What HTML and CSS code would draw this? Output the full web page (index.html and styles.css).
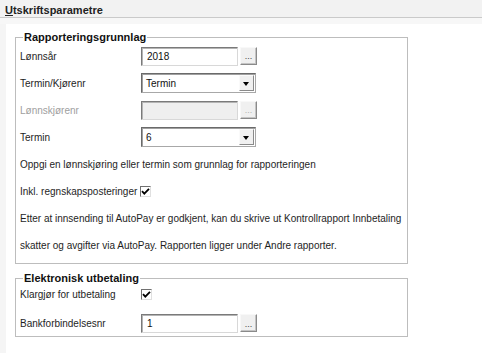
FILE: index.html
```html
<!DOCTYPE html>
<html>
<head>
<meta charset="utf-8">
<link rel="stylesheet" href="styles.css">
</head>
<body>
<div class="header"><span class="title"><u>U</u>tskriftsparametre</span></div>
<div class="band"></div>
<div class="main">
  <div class="content">
    <fieldset class="group g1">
      <legend>Rapporteringsgrunnlag</legend>
      <div class="rows">
        <div class="row">
          <span class="label">Lønnsår</span>
          <span class="field"><span class="input">2018</span><span class="btn">...</span></span>
        </div>
        <div class="row">
          <span class="label">Termin/Kjørenr</span>
          <span class="select"><span class="val">Termin</span><span class="arrow"></span></span>
        </div>
        <div class="row">
          <span class="label disabled">Lønnskjørenr</span>
          <span class="field"><span class="input dis"></span><span class="btn dis">...</span></span>
        </div>
        <div class="row">
          <span class="label">Termin</span>
          <span class="select"><span class="val">6</span><span class="arrow"></span></span>
        </div>
        <div class="row">Oppgi en lønnskjøring eller termin som grunnlag for rapporteringen</div>
        <div class="row">Inkl. regnskapsposteringer&nbsp;<span class="check"><svg width="9" height="9" viewBox="0 0 9 9"><path d="M1 4.2 L3.3 6.6 L8 1.8" fill="none" stroke="#000" stroke-width="1.8"/></svg></span></div>
        <div class="row">Etter at innsending til AutoPay er godkjent, kan du skrive ut Kontrollrapport Innbetaling</div>
        <div class="row">skatter og avgifter via AutoPay. Rapporten ligger under Andre rapporter.</div>
      </div>
    </fieldset>
    <fieldset class="group g2">
      <legend>Elektronisk utbetaling</legend>
      <div class="rows2">
        <div class="row r14">
          <span class="label">Klargjør for utbetaling</span>
          <span class="check"><svg width="9" height="9" viewBox="0 0 9 9"><path d="M1 4.2 L3.3 6.6 L8 1.8" fill="none" stroke="#000" stroke-width="1.8"/></svg></span>
        </div>
        <div class="row r19">
          <span class="label">Bankforbindelsesnr</span>
          <span class="field"><span class="input">1</span><span class="btn">...</span></span>
        </div>
      </div>
    </fieldset>
  </div>
</div>
</body>
</html>
```
FILE: styles.css
```css
html, body {
  margin: 0;
  padding: 0;
}
body {
  background: #f4f4f4;
  font-family: "Liberation Sans", Arial, sans-serif;
  font-size: 10px;
  color: #1e1e1e;
  width: 482px;
  height: 353px;
  overflow: hidden;
}
.header {
  height: 17px;
  background: #f2f2f2;
  border-bottom: 1px solid #cacaca;
  display: flex;
  align-items: center;
  padding-left: 5px;
}
.title {
  font-weight: bold;
  font-size: 11px;
  color: #222;
  padding-top: 2px;
}
.band {
  height: 6px;
  background: #f7f7f7;
}
.main {
  background: #f5f5f5;
  padding-left: 6px;
}
.content {
  background: #fff;
  padding-top: 7px;
  height: 330px;
}
.group {
  margin: 0 0 0 9px;
  width: 393px;
  box-sizing: border-box;
  border: 1px solid #bdbdbd;
  padding: 2px 0 8px 4px;
}
.group legend {
  font-weight: bold;
  font-size: 11px;
  line-height: 13px;
  color: #111;
  padding: 0 1px;
  margin-left: 3px;
}
.g2 {
  margin-top: 8px;
  padding-bottom: 3px;
}
.rows {
  display: flex;
  flex-direction: column;
  gap: 7px;
}
.rows2 {
  display: flex;
  flex-direction: column;
  gap: 13px;
}
.row {
  height: 20px;
  display: flex;
  align-items: center;
  white-space: nowrap;
}
.r14 { height: 14px; }
.r19 { height: 19px; }
.label {
  width: 121px;
  flex: none;
}
.label.disabled {
  color: #a0a0a0;
}
.field {
  display: flex;
  gap: 2px;
  height: 19px;
}
.input {
  width: 97px;
  height: 19px;
  box-sizing: border-box;
  border: 1px solid;
  border-color: #7a7a7a #d8d8d8 #d8d8d8 #7a7a7a;
  box-shadow: inset 1px 1px 0 #b4b4b4;
  background: #fff;
  padding-left: 5px;
  display: flex;
  align-items: center;
  font-size: 10px;
  color: #111;
}
.input.dis {
  background: #efefef;
}
.btn {
  width: 17px;
  height: 18px;
  box-sizing: border-box;
  border: 1px solid;
  border-color: #f8f8f8 #8a8a8a #8a8a8a #f8f8f8;
  box-shadow: inset -1px -1px 0 #c4c4c4;
  background: #f0f0f0;
  display: flex;
  align-items: center;
  justify-content: center;
  font-size: 9px;
  color: #444;
  padding-top: 1px;
}
.btn.dis {
  color: #b0b0b0;
}
.select {
  width: 115px;
  height: 20px;
  box-sizing: border-box;
  border: 1px solid;
  border-color: #6a6a6a #a8a8a8 #a8a8a8 #6a6a6a;
  box-shadow: inset 1px 1px 0 #a0a0a0;
  background: #fff;
  display: flex;
  align-items: stretch;
}
.select .val {
  flex: 1;
  display: flex;
  align-items: center;
  padding-left: 4px;
  color: #111;
}
.select .arrow {
  width: 15px;
  margin: 1px 1px 1px 0;
  box-sizing: border-box;
  background: #f0f0f0;
  border: 1px solid;
  border-color: #fafafa #8a8a8a #8a8a8a #fafafa;
  position: relative;
}
.select .arrow::after {
  content: "";
  position: absolute;
  left: 3px;
  top: 6px;
  border-left: 3.5px solid transparent;
  border-right: 3.5px solid transparent;
  border-top: 4px solid #000;
}
.check {
  width: 11px;
  height: 11px;
  box-sizing: border-box;
  border: 1px solid;
  border-color: #707070 #e0e0e0 #e0e0e0 #707070;
  background: #fff;
  display: inline-flex;
  align-items: center;
  justify-content: center;
}
.check svg {
  display: block;
}
```
